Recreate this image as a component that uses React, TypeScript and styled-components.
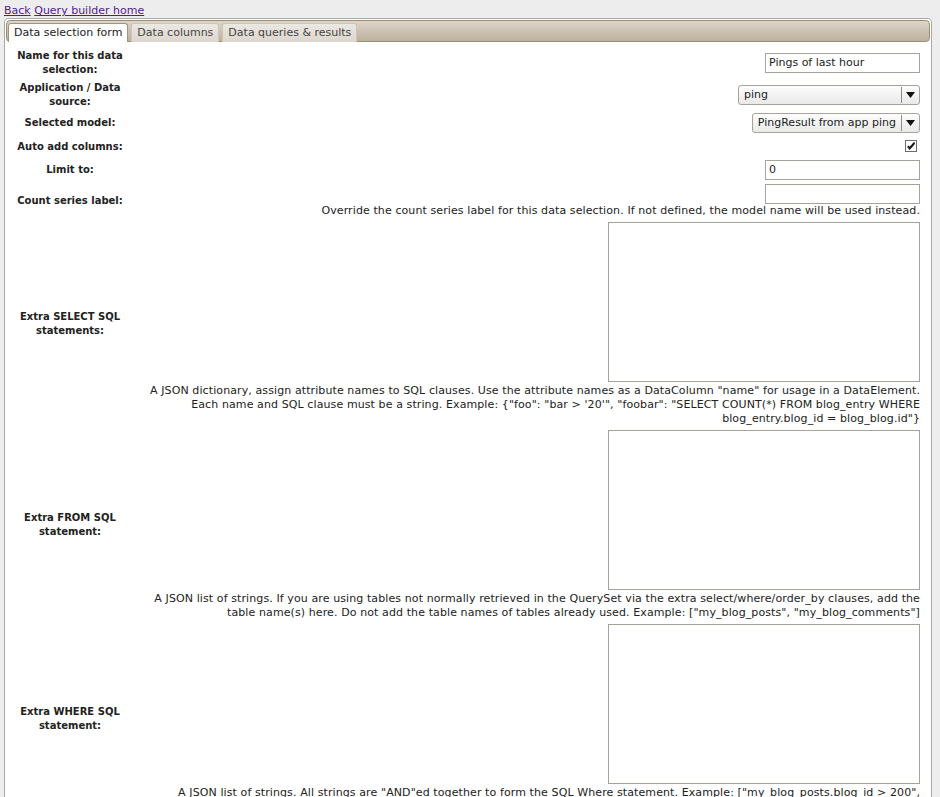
import styled, { createGlobalStyle } from "styled-components";

const GlobalStyle = createGlobalStyle`
  body {
    margin: 4px 8px 0 4px;
    background: #ededed;
    font-family: "DejaVu Sans", Verdana, sans-serif;
    color: #222;
  }
`;

const TopLinks = styled.div`
  font-size: 11px;
  line-height: 14px;
  height: 14px;

  a {
    color: #551a8b;
    text-decoration: underline;
  }
`;

const Panel = styled.div`
  background: #fff;
  border: 1px solid #aaa;
  border-radius: 4px;
  padding: 1px;
`;

const TabBar = styled.ul`
  display: flex;
  align-items: flex-end;
  list-style: none;
  margin: 0;
  padding: 2px 1px 0;
  height: 18px;
  border: 1px solid #9f8e74;
  border-radius: 4px;
  background: linear-gradient(#ddd5ca, #bdb09d);
`;

const Tab = styled.li<{ $active?: boolean }>`
  box-sizing: border-box;
  height: 19px;
  margin: 0 3px -1px 0;
  padding: 0 5px;
  font-size: 11px;
  line-height: 17px;
  white-space: nowrap;
  border: 1px solid ${(p) => (p.$active ? "#a3937b" : "#cfc6b8")};
  border-bottom: 0;
  border-radius: 3px 3px 0 0;
  color: ${(p) => (p.$active ? "#222" : "#444")};
  background: ${(p) =>
    p.$active ? "#fff" : "linear-gradient(#ebe8e3, #dcd6cd)"};
`;

const Content = styled.div`
  padding: 4px 7px 0 2px;
`;

const FormTable = styled.table`
  width: 100%;
  border-spacing: 2px;
  font-size: 10px;
  line-height: 14px;

  td {
    padding: 1px;
    vertical-align: middle;
  }
`;

const Label = styled.td`
  width: 118px;
  text-align: center;
  font-weight: bold;
`;

const Field = styled.td`
  text-align: right;
`;

const FieldStack = styled.div`
  display: flex;
  flex-direction: column;
  align-items: flex-end;
`;

const TextInput = styled.div`
  box-sizing: border-box;
  width: 155px;
  height: 20px;
  padding: 0 3px;
  border: 1px solid #a7a29a;
  background: #fff;
  font-size: 11px;
  line-height: 18px;
  text-align: left;
  color: #222;
`;

const SelectBox = styled.div<{ $width?: number }>`
  box-sizing: border-box;
  display: flex;
  align-items: stretch;
  height: 20px;
  width: ${(p) => (p.$width ? `${p.$width}px` : "auto")};
  border: 1px solid #a7a29a;
  border-radius: 3px;
  background: linear-gradient(#fdfdfd, #e9e9e9);
  font-size: 11px;
  line-height: 18px;
  color: #222;
`;

const SelectValue = styled.span`
  flex: 1;
  padding: 0 5px;
  text-align: left;
  white-space: nowrap;
`;

const SelectArrow = styled.span`
  display: flex;
  align-items: center;
  justify-content: center;
  width: 17px;
  margin: 1px 0;
  border-left: 1px solid #8f8b85;
`;

const CheckBox = styled.span`
  box-sizing: border-box;
  display: flex;
  align-items: center;
  justify-content: center;
  width: 12px;
  height: 12px;
  margin: 3px 3px 4px 3px;
  border: 1px solid #6b6b6b;
  background: #fff;
`;

const TextArea = styled.div`
  box-sizing: border-box;
  width: 312px;
  height: 160px;
  margin-bottom: 2px;
  border: 1px solid #a7a29a;
  background: #fff;
`;

const HelpText = styled.div`
  font-size: 11px;
  line-height: 14px;
  letter-spacing: 0.1px;
  text-align: right;
  color: #222;
`;

const Arrow = () => (
  <svg width="9" height="6" viewBox="0 0 9 6">
    <path d="M0 0h9L4.5 6z" fill="#111" />
  </svg>
);

const Check = () => (
  <svg width="8" height="8" viewBox="0 0 8 8">
    <path d="M0.5 4.5l2 2.5L7.5 0.5v2L2.6 8 0.5 5.6z" fill="#111" />
    <path d="M1 4l1.6 2L7.5 0.5" stroke="#111" strokeWidth="1.6" fill="none" />
  </svg>
);

const Select = ({ value, width }: { value: string; width?: number }) => (
  <SelectBox $width={width}>
    <SelectValue>{value}</SelectValue>
    <SelectArrow>
      <Arrow />
    </SelectArrow>
  </SelectBox>
);

const App = () => {
  return (
    <>
      <GlobalStyle />
      <TopLinks>
        <a href="#back">Back</a> <a href="#home">Query builder home</a>
      </TopLinks>
      <Panel>
        <TabBar>
          <Tab $active>Data selection form</Tab>
          <Tab>Data columns</Tab>
          <Tab>Data queries &amp; results</Tab>
        </TabBar>
        <Content>
          <FormTable>
            <tbody>
              <tr>
                <Label>Name for this data selection:</Label>
                <Field>
                  <FieldStack>
                    <TextInput>Pings of last hour</TextInput>
                  </FieldStack>
                </Field>
              </tr>
              <tr>
                <Label>Application / Data source:</Label>
                <Field>
                  <FieldStack>
                    <Select value="ping" width={182} />
                  </FieldStack>
                </Field>
              </tr>
              <tr>
                <Label>Selected model:</Label>
                <Field>
                  <FieldStack>
                    <Select value="PingResult from app ping" />
                  </FieldStack>
                </Field>
              </tr>
              <tr>
                <Label>Auto add columns:</Label>
                <Field>
                  <FieldStack>
                    <CheckBox>
                      <Check />
                    </CheckBox>
                  </FieldStack>
                </Field>
              </tr>
              <tr>
                <Label>Limit to:</Label>
                <Field>
                  <FieldStack>
                    <TextInput>0</TextInput>
                  </FieldStack>
                </Field>
              </tr>
              <tr>
                <Label>Count series label:</Label>
                <Field>
                  <FieldStack>
                    <TextInput />
                    <HelpText>
                      Override the count series label for this data selection. If not
                      defined, the model name will be used instead.
                    </HelpText>
                  </FieldStack>
                </Field>
              </tr>
              <tr>
                <Label>Extra SELECT SQL statements:</Label>
                <Field>
                  <FieldStack>
                    <TextArea />
                    <HelpText>
                      A JSON dictionary, assign attribute names to SQL clauses. Use the
                      attribute names as a DataColumn "name" for usage in a DataElement.
                      Each name and SQL clause must be a string. Example: {"{"}"foo":
                      "bar &gt; '20'", "foobar": "SELECT COUNT(*) FROM blog_entry WHERE
                      blog_entry.blog_id = blog_blog.id"{"}"}
                    </HelpText>
                  </FieldStack>
                </Field>
              </tr>
              <tr>
                <Label>Extra FROM SQL statement:</Label>
                <Field>
                  <FieldStack>
                    <TextArea />
                    <HelpText>
                      A JSON list of strings. If you are using tables not normally
                      retrieved in the QuerySet via the extra select/where/order_by
                      clauses, add the table name(s) here. Do not add the table names of
                      tables already used. Example: ["my_blog_posts", "my_blog_comments"]
                    </HelpText>
                  </FieldStack>
                </Field>
              </tr>
              <tr>
                <Label>Extra WHERE SQL statement:</Label>
                <Field>
                  <FieldStack>
                    <TextArea />
                    <HelpText>
                      A JSON list of strings. All strings are "AND"ed together to form the
                      SQL Where statement. Example: ["my_blog_posts.blog_id &gt; 200",
                      "my_blog_posts.blog_id &lt; 1000"]
                    </HelpText>
                  </FieldStack>
                </Field>
              </tr>
            </tbody>
          </FormTable>
        </Content>
      </Panel>
    </>
  );
};

export default App;
